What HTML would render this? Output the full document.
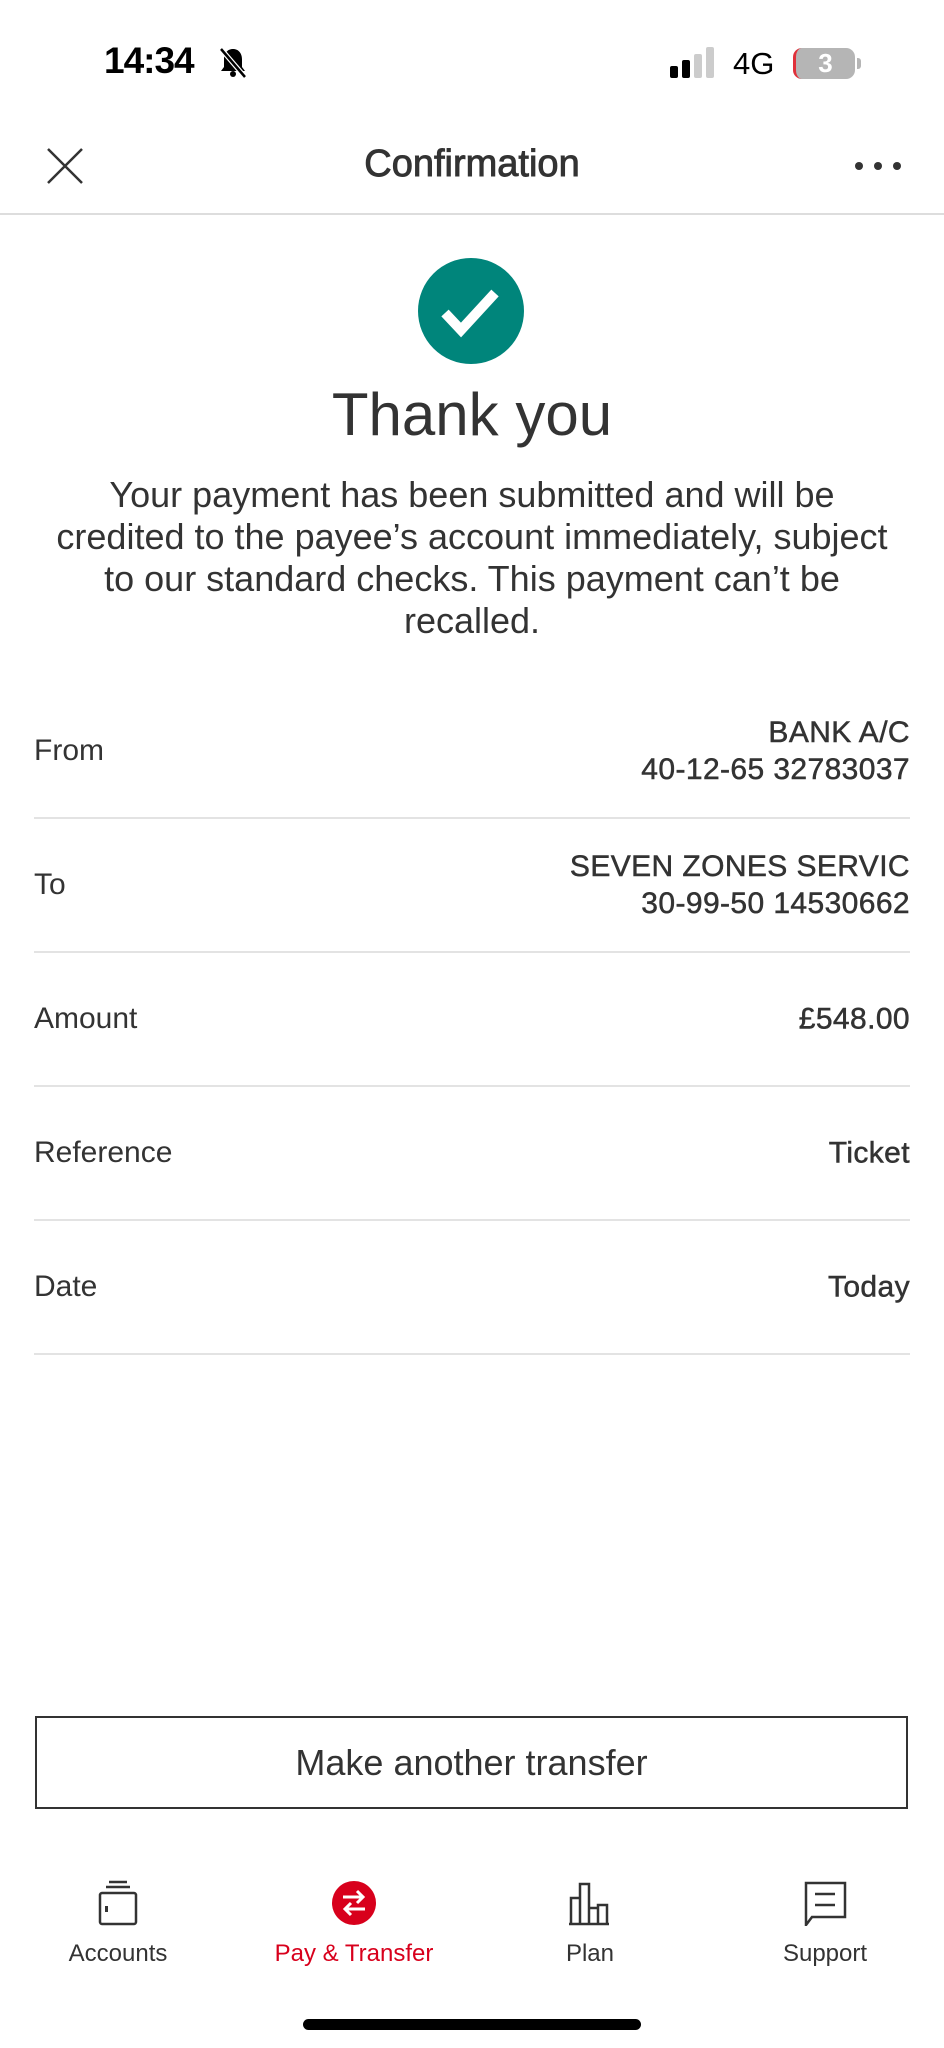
<!DOCTYPE html>
<html><head><meta charset="utf-8"><style>
*{margin:0;padding:0;box-sizing:border-box}
body{width:944px;height:2048px;background:#fff;font-family:"Liberation Sans",sans-serif;color:#333;position:relative;overflow:hidden}
.a{position:absolute}
.row{position:absolute;left:34px;width:876px;height:134px;border-bottom:2px solid #e3e3e3;font-size:30px}
.row .l{position:absolute;left:0;top:50%;transform:translateY(-50%)}
.row .r{position:absolute;right:0;top:50%;transform:translateY(-50%);text-align:right;line-height:37px;font-size:30px;letter-spacing:0.4px;-webkit-text-stroke:0.5px #333;white-space:nowrap}
.tab{position:absolute;top:1880px;width:200px;text-align:center;font-size:24px;color:#333}
.tab svg{display:block;margin:0 auto 14px}
</style></head><body>
<div class="a" style="left:104px;top:40px;font-size:37px;font-weight:bold;color:#000;letter-spacing:-1px">14:34</div>
<svg class="a" style="left:217px;top:46px" width="32" height="34" viewBox="0 0 32 34"><path d="M16 3c-6 0-9 5-9 10v8l-3 4h24l-3-4v-8c0-5-3-10-9-10z" fill="#000"/><circle cx="16" cy="28" r="3" fill="#000"/><path d="M4 3l24 28" stroke="#fff" stroke-width="5"/><path d="M4 3l24 28" stroke="#000" stroke-width="2.5"/></svg>
<div class="a" style="left:670px;top:66px;width:8px;height:12px;background:#000;border-radius:2px"></div>
<div class="a" style="left:682px;top:60px;width:8px;height:18px;background:#000;border-radius:2px"></div>
<div class="a" style="left:694px;top:54px;width:8px;height:24px;background:#ccc;border-radius:2px"></div>
<div class="a" style="left:706px;top:47px;width:8px;height:31px;background:#ccc;border-radius:2px"></div>
<div class="a" style="left:733px;top:46px;font-size:31px;color:#000">4G</div>
<div class="a" style="left:793px;top:48px;width:62px;height:31px;background:#b5b5b5;border-radius:9px;border-left:3px solid #e0303a;color:#fff;font-weight:bold;font-size:26px;text-align:center;line-height:31px">3</div>
<div class="a" style="left:857px;top:58px;width:4px;height:11px;background:#b5b5b5;border-radius:0 3px 3px 0"></div>
<svg class="a" style="left:46px;top:147px" width="38" height="38"><path d="M2 2L36 36M36 2L2 36" stroke="#333" stroke-width="2.5"/></svg>
<div class="a" style="left:0;width:944px;top:143px;text-align:center;font-size:38px;color:#333;-webkit-text-stroke:0.9px #333">Confirmation</div>
<div class="a" style="left:855px;top:162px;width:8px;height:8px;border-radius:50%;background:#333;box-shadow:19px 0 #333,38px 0 #333"></div>
<div class="a" style="left:0;top:213px;width:944px;height:2px;background:#ddd"></div>
<svg class="a" style="left:418px;top:258px" width="106" height="106"><circle cx="53" cy="53" r="53" fill="#00857b"/><path d="M27 55l16 17 34-37" stroke="#fff" stroke-width="10" fill="none"/></svg>
<div class="a" style="left:0;width:944px;top:380px;text-align:center;font-size:60px;color:#333">Thank you</div>
<div class="a" style="left:0;width:944px;top:474px;text-align:center;font-size:36px;line-height:42px;color:#333;white-space:nowrap">Your payment has been submitted and will be<br>credited to the payee’s account immediately, subject<br>to our standard checks. This payment can’t be<br>recalled.</div>
<div class="row" style="top:685px"><span class="l">From</span><span class="r">BANK A/C<br>40-12-65 32783037</span></div>
<div class="row" style="top:819px"><span class="l">To</span><span class="r">SEVEN ZONES SERVIC<br>30-99-50 14530662</span></div>
<div class="row" style="top:953px"><span class="l">Amount</span><span class="r">£548.00</span></div>
<div class="row" style="top:1087px"><span class="l">Reference</span><span class="r">Ticket</span></div>
<div class="row" style="top:1221px"><span class="l">Date</span><span class="r">Today</span></div>
<div class="a" style="left:35px;top:1716px;width:873px;height:93px;border:2px solid #333;text-align:center;line-height:89px;font-size:36px;color:#333">Make another transfer</div>
<div class="tab" style="left:18px"><svg width="46" height="46" viewBox="0 0 46 46"><path d="M14 2h18M11 7h24" stroke="#333" stroke-width="2.5"/><rect x="5" y="13" width="36" height="31" rx="2" fill="none" stroke="#333" stroke-width="2.5"/><rect x="10" y="26" width="3" height="6" fill="#333"/></svg>Accounts</div>
<div class="tab" style="left:254px;color:#d8001c"><svg width="46" height="46" viewBox="0 0 46 46"><circle cx="23" cy="23" r="22" fill="#d8001c"/><path d="M12 17h20M26 11l6 6-6 6M34 29H14M20 23l-6 6 6 6" stroke="#fff" stroke-width="3" fill="none"/></svg>Pay &amp; Transfer</div>
<div class="tab" style="left:490px"><svg width="46" height="46" viewBox="0 0 46 46"><path d="M4 44V18h9v26M13 44V4h9v40M22 44V28h9v16M31 44V25h9v19M2 44h40" stroke="#333" stroke-width="2.5" fill="none"/></svg>Plan</div>
<div class="tab" style="left:725px"><svg width="46" height="46" viewBox="0 0 46 46"><path d="M4 3h39v34H10l-6 8z" stroke="#333" stroke-width="2.5" fill="none"/><path d="M13 14h20M13 25h20" stroke="#333" stroke-width="2.5"/></svg>Support</div>
<div class="a" style="left:303px;top:2019px;width:338px;height:11px;background:#000;border-radius:6px"></div>
</body></html>
